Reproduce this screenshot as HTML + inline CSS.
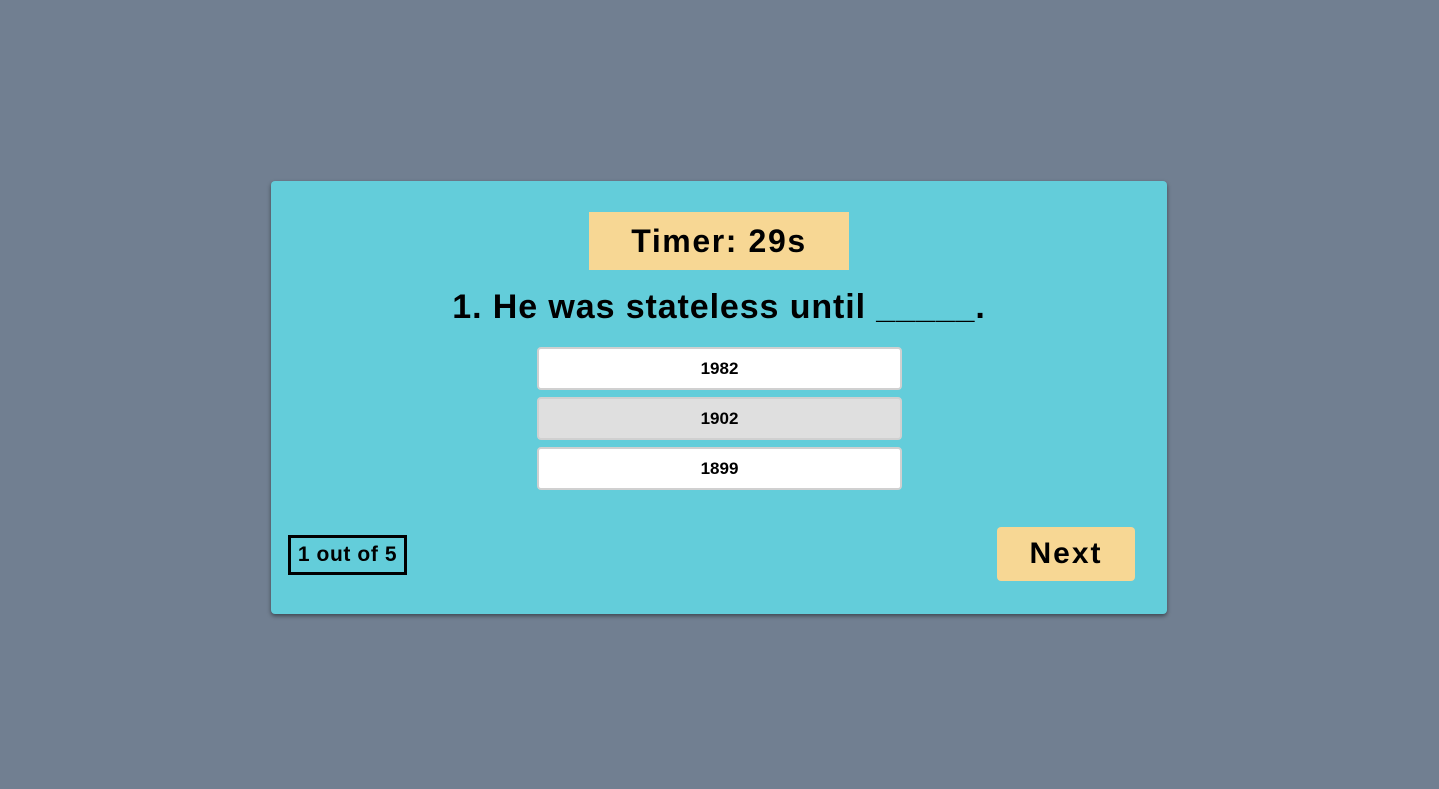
<!DOCTYPE html>
<html><head><style>
html,body{margin:0;padding:0;width:1439px;height:789px;background:#717f91;overflow:hidden;font-family:"Liberation Sans",sans-serif;font-weight:bold;color:#000}
.card{position:absolute;left:271px;top:181px;width:896px;height:433px;background:#63cdda;border-radius:4px;box-shadow:0 2px 4px rgba(0,0,0,.45)}
.timer{position:absolute;left:318px;top:31px;width:260px;height:58px;background:#f7d794;font-size:32px;line-height:58px;text-align:center;letter-spacing:1.6px}
.q{position:absolute;left:0;width:896px;top:106px;text-align:center;font-size:34px;line-height:40px;letter-spacing:0.9px}
.opt{position:absolute;left:266px;width:361px;height:39px;background:#fff;border:2px solid #d0d0d0;border-radius:4px;box-sizing:content-box;font-size:17px;line-height:39px;text-align:center}
.count{position:absolute;left:17px;top:354px;width:113px;height:34px;border:3px solid #000;font-size:21px;line-height:34px;text-align:center;letter-spacing:0.6px}
.next{position:absolute;left:726px;top:346px;width:138px;height:54px;background:#f7d794;border-radius:4px;font-size:30px;line-height:54px;text-align:center;letter-spacing:2px}
</style></head><body>
<div class="card">
<div class="timer">Timer: 29s</div>
<div class="q">1. He was stateless until _____.</div>
<div class="opt" style="top:166px">1982</div>
<div class="opt" style="top:216px;background:#dfdfdf">1902</div>
<div class="opt" style="top:266px">1899</div>
<div class="count">1 out of 5</div>
<div class="next">Next</div>
</div>
</body></html>
